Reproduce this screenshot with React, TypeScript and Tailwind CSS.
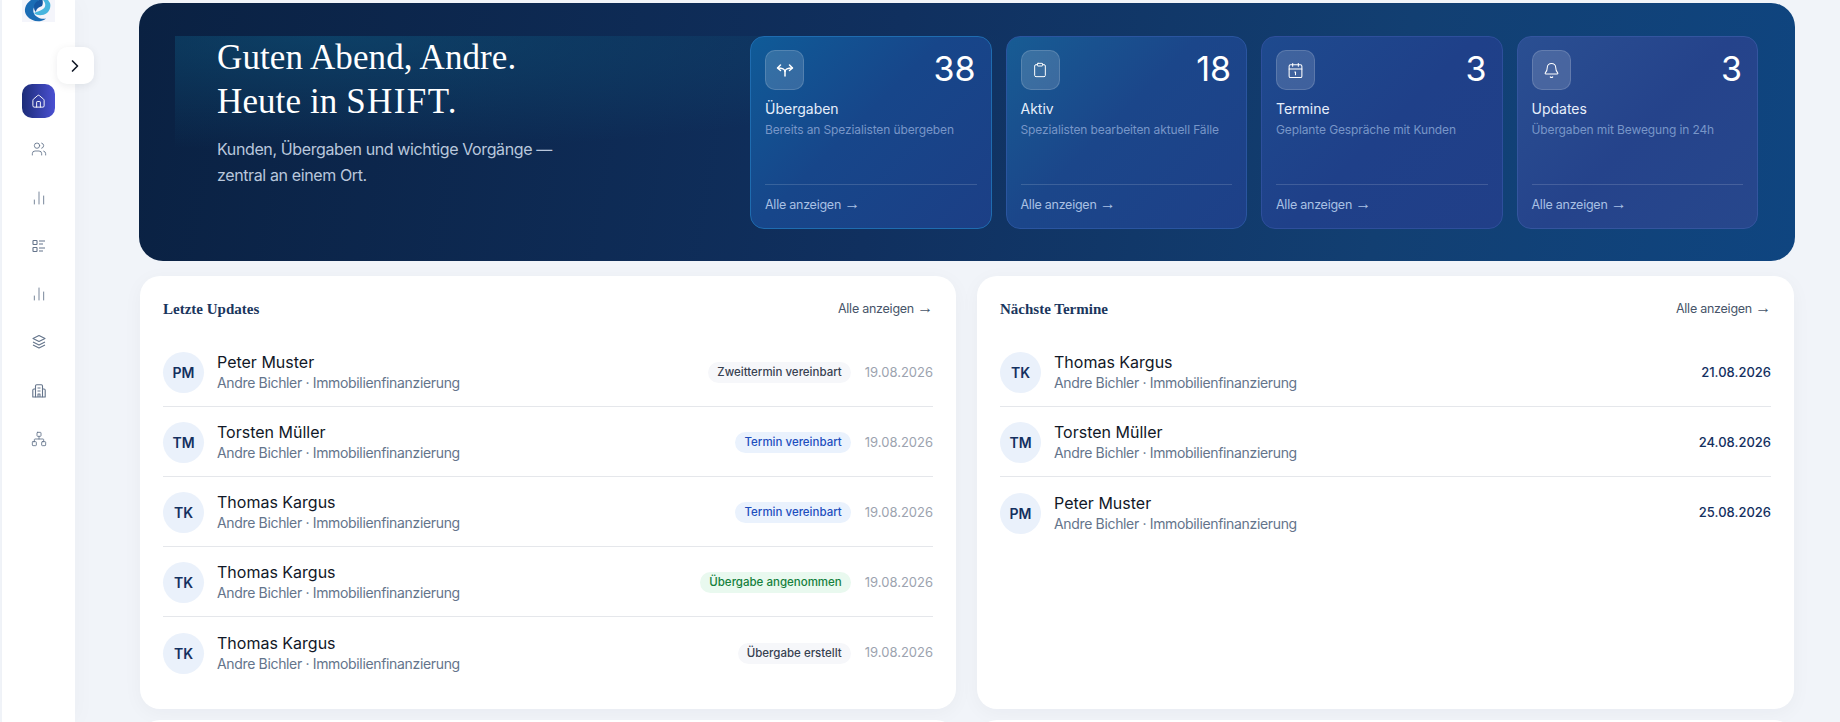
import React from "react";
import {
  Bell,
  Calendar1,
  ChartNoAxesColumn,
  ChevronRight,
  Clipboard,
  House,
  Network,
  Users,
} from "lucide-react";

const sans = "font-['Inter','Liberation_Sans',sans-serif]";
const serif = "font-['Liberation_Serif',serif]";

const ChecklistIcon = () => (
  <svg width="16" height="16" viewBox="0 0 16 16" fill="none" stroke="currentColor" strokeWidth="1.1">
    <rect x="2" y="2.5" width="4" height="4" rx="0.6" />
    <rect x="2" y="9.5" width="4" height="4" rx="0.6" />
    <path d="M8 3h6M8 6h4M8 10h6M8 13h4" />
  </svg>
);

const LayersIcon = () => (
  <svg width="16" height="16" viewBox="0 0 16 16" fill="none" stroke="currentColor" strokeWidth="1.1" strokeLinejoin="round">
    <path d="M8 1.5l6 3-6 3-6-3z" />
    <path d="M2 8l6 3 6-3" />
    <path d="M2 11l6 3 6-3" />
  </svg>
);

const BuildingIcon = () => (
  <svg width="16" height="16" viewBox="0 0 16 16" fill="none" stroke="currentColor" strokeWidth="1.1" strokeLinejoin="round">
    <path d="M4.5 14V3a1.2 1.2 0 0 1 1.2-1.2h4.6A1.2 1.2 0 0 1 11.500 3v11z" />
    <path d="M4.500 6H3a1.200 1.200 0 0 0-1.200 1.200V14h2.700M11.500 6H13a1.200 1.200 0 0 1 1.200 1.200V14h-2.700" />
    <path d="M6.500 5h3M6.500 8h3M7 14v-3h2v3" />
  </svg>
);

const SplitArrowsIcon = () => (
  <svg width="18" height="16" viewBox="0 0 18 16" fill="none" stroke="currentColor" strokeWidth="1.5" strokeLinecap="round" strokeLinejoin="round">
    <path d="M9 14V9.500C9 7.500 6 6 2 6" />
    <path d="M9 9.500C9 7.500 12 6 16 6" />
    <path d="M4.500 3L1.500 6l3 2.500" />
    <path d="M13.500 3l3 3-3 2.500" />
  </svg>
);

const Logo = () => (
  <svg width="33" height="22" viewBox="0 0 33 22" className="bg-[#f4f5fb]">
    <path d="M9 0C3 4 1 11 5 16c3 4 9 6 14 5 2-.5 4-1.500 5-2.500-5 1-10-1-12-5-1.500-3-.5-7 3-9.500L17 0z" fill="#1b6db5" />
    <path d="M12 13c3 3 9 3 13 0 3-2.500 4-7 3-10l-2-3h-5c3 3 3 7 0 9-2.500 2-6 2.500-9 4z" fill="#47b5de" />
    <path d="M17 0c-2 1.500-5 3-5 7 0 2 .5 4 2 5 0-3 3-5 6-6 1-2 1-4 .5-6z" fill="#1557a2" />
  </svg>
);

const navIcons = [
  <Users key="u" size={16} strokeWidth={1.3} />,
  <ChartNoAxesColumn key="c" size={16} strokeWidth={1.3} />,
  <ChecklistIcon key="l" />,
  <ChartNoAxesColumn key="c2" size={16} strokeWidth={1.3} />,
  <LayersIcon key="s" />,
  <BuildingIcon key="b" />,
  <Network key="n" size={16} strokeWidth={1.3} />,
];

const Sidebar = () => (
  <aside className="relative z-10 ml-[2px] h-full w-[73px] shrink-0 bg-white shadow-[4px_0_20px_rgba(15,23,42,0.025)]">
    <div className="absolute left-[20px] top-0">
      <Logo />
    </div>
    <button className="absolute left-[55px] top-[47px] flex h-[37px] w-[37px] items-center justify-center rounded-[10px] bg-white pr-[1px] text-[#111827] shadow-[0_2px_8px_rgba(15,23,42,0.08)]">
      <ChevronRight size={20} strokeWidth={2} />
    </button>
    <nav className="flex flex-col items-center pt-[84px]">
      <div className="flex h-[34px] w-[33px] items-center justify-center rounded-[10px] bg-[linear-gradient(90deg,#1c2c78,#4a50d2)] text-white">
        <House size={15} strokeWidth={1.5} />
      </div>
      {navIcons.map((icon, i) => (
        <div key={i} className="mt-[14.3px] flex h-[34px] w-[33px] items-center justify-center text-[#64748b]">
          {icon}
        </div>
      ))}
    </nav>
  </aside>
);

const stats = [
  { icon: <SplitArrowsIcon />, value: "38", title: "Übergaben", desc: "Bereits an Spezialisten übergeben", bg: "bg-[linear-gradient(135deg,#0f5b98_0%,#17468a_45%,#1c3f86_100%)]", border: "border-[#1f6cb0]" },
  { icon: <Clipboard size={16} strokeWidth={1.5} />, value: "18", title: "Aktiv", desc: "Spezialisten bearbeiten aktuell Fälle", bg: "bg-[linear-gradient(135deg,#175c94_0%,#1b468a_45%,#1e4088_100%)]", border: "border-[#2a55a0]" },
  { icon: <Calendar1 size={17} strokeWidth={1.5} />, value: "3", title: "Termine", desc: "Geplante Gespräche mit Kunden", bg: "bg-[linear-gradient(135deg,#1e4a8e_0%,#1f4089_50%,#213f88_100%)]", border: "border-[#2e4f9c]" },
  { icon: <Bell size={17} strokeWidth={1.5} />, value: "3", title: "Updates", desc: "Übergaben mit Bewegung in 24h", bg: "bg-[linear-gradient(135deg,#2a4f92_0%,#25438b_50%,#27478c_100%)]", border: "border-[#34559f]" },
];

const AllLink = ({ className }: { className: string }) => (
  <span className={`text-[12.5px] tracking-[-0.25px] ${className}`}>
    Alle anzeigen <span className="font-['Liberation_Sans',sans-serif] text-[16px] leading-[16px]">→</span>
  </span>
);

const StatCard = ({ stat }: { stat: (typeof stats)[number] }) => (
  <div className={`flex h-[193px] flex-col rounded-[14px] border px-[14px] pt-[13px] ${stat.bg} ${stat.border}`}>
    <div className="flex items-start justify-between pr-[1px]">
      <div className="flex h-[40px] w-[39px] items-center justify-center rounded-[10px] border border-white/15 bg-white/15 text-white">
        {stat.icon}
      </div>
      <span className="text-[34px] leading-[38px] font-normal text-white">{stat.value}</span>
    </div>
    <div className="mt-[9px] text-[14px] leading-[20px] font-normal text-[#e6eefb]">{stat.title}</div>
    <div className="mt-[1px] text-[12px] leading-[20px] tracking-[-0.12px] whitespace-nowrap text-[#7896c8]">{stat.desc}</div>
    <div className="mt-auto flex h-[44px] items-center border-t border-white/15 pb-[3px]">
      <AllLink className="text-[#a9c0e4]" />
    </div>
  </div>
);

const Hero = () => (
  <section className="mt-[3px] h-[258px] rounded-[24px] bg-[linear-gradient(100deg,#0a2142_0%,#10305f_45%,#123f72_75%,#0f4580_100%)] pl-[36px] pr-[37px] pt-[33px]">
    <div className="flex h-[193px] justify-between bg-[radial-gradient(ellipse_680px_115px_at_150px_0,rgba(14,85,125,0.55),transparent)]">
      <div className="pl-[42px]">
        <h1 className={`${serif} text-[35px] leading-[44px] tracking-[0.1px] text-white`}>
          Guten Abend, Andre.
          <br />
          Heute in <span className="tracking-[1.4px]">SHIFT.</span>
        </h1>
        <p className="mt-[12px] w-[360px] text-[16px] leading-[26px] tracking-[-0.38px] text-[#b9c7dc]">
          Kunden, Übergaben und wichtige Vorgänge — zentral an einem Ort.
        </p>
      </div>
      <div className="grid w-[1008px] grid-cols-4 gap-[14px]">
        {stats.map((s) => (
          <StatCard key={s.title} stat={s} />
        ))}
      </div>
    </div>
  </section>
);

const badgeStyles = {
  gray: "bg-[#f6f7fa] text-[#374151]",
  blue: "bg-[#eaf2fd] text-[#1d4ebd]",
  green: "bg-[#e9f9ef] text-[#15803d]",
};

const updates = [
  { i: "PM", name: "Peter Muster", badge: "Zweittermin vereinbart", tone: "gray" },
  { i: "TM", name: "Torsten Müller", badge: "Termin vereinbart", tone: "blue" },
  { i: "TK", name: "Thomas Kargus", badge: "Termin vereinbart", tone: "blue" },
  { i: "TK", name: "Thomas Kargus", badge: "Übergabe angenommen", tone: "green" },
  { i: "TK", name: "Thomas Kargus", badge: "Übergabe erstellt", tone: "gray" },
] as const;

const termine = [
  { i: "TK", name: "Thomas Kargus", date: "21.08.2026" },
  { i: "TM", name: "Torsten Müller", date: "24.08.2026" },
  { i: "PM", name: "Peter Muster", date: "25.08.2026" },
];

const Person = ({ i, name }: { i: string; name: string }) => (
  <div className="flex items-center gap-[13px]">
    <div className="flex h-[41px] w-[41px] items-center justify-center rounded-full bg-[#eaf1fb] text-[14px] font-semibold text-[#14305f]">
      {i}
    </div>
    <div>
      <div className="text-[16px] leading-[21px] font-normal text-[#111827]">{name}</div>
      <div className="text-[14px] leading-[20px] tracking-[-0.34px] text-[#64748b]">Andre Bichler · Immobilienfinanzierung</div>
    </div>
  </div>
);

const Panel = ({ title, children }: { title: string; children: React.ReactNode }) => (
  <div className="h-[433px] rounded-[20px] bg-white px-[23px] pt-[21px] shadow-[0_4px_20px_rgba(15,23,42,0.04)]">
    <div className="mb-[16px] flex h-[24px] items-center justify-between">
      <h2 className={`${serif} text-[15px] font-bold text-[#1a365d]`}>{title}</h2>
      <AllLink className="text-[#475569]" />
    </div>
    {children}
  </div>
);

const rowClass = "flex h-[70px] items-center justify-between border-b border-[#e5e7eb] pt-[2px] last:border-b-0";

export default function App() {
  return (
    <div className={`flex h-[722px] overflow-hidden bg-[#f1f4f9] ${sans}`}>
      <Sidebar />
      <main className="ml-[64px] w-[1656px] shrink-0">
        <Hero />
        <div className="mt-[15px] grid grid-cols-[816px_817px] gap-x-[21px] gap-y-[11px] pl-[1px]">
          <Panel title="Letzte Updates">
            {updates.map((u, idx) => (
              <div key={idx} className={rowClass}>
                <Person i={u.i} name={u.name} />
                <div className="flex items-center gap-[14px]">
                  <span className={`rounded-full px-[9px] py-[3px] text-[11.5px] leading-[15px] font-medium ${badgeStyles[u.tone]}`}>
                    {u.badge}
                  </span>
                  <span className="text-[13px] text-[#9ca3af]">19.08.2026</span>
                </div>
              </div>
            ))}
          </Panel>
          <Panel title="Nächste Termine">
            {termine.map((t) => (
              <div key={t.date} className={rowClass}>
                <Person i={t.i} name={t.name} />
                <span className="text-[13px] font-medium text-[#14305f]">{t.date}</span>
              </div>
            ))}
          </Panel>
          <div className="h-[20px] rounded-t-[20px] bg-white" />
          <div className="h-[20px] rounded-t-[20px] bg-white" />
        </div>
      </main>
    </div>
  );
}
